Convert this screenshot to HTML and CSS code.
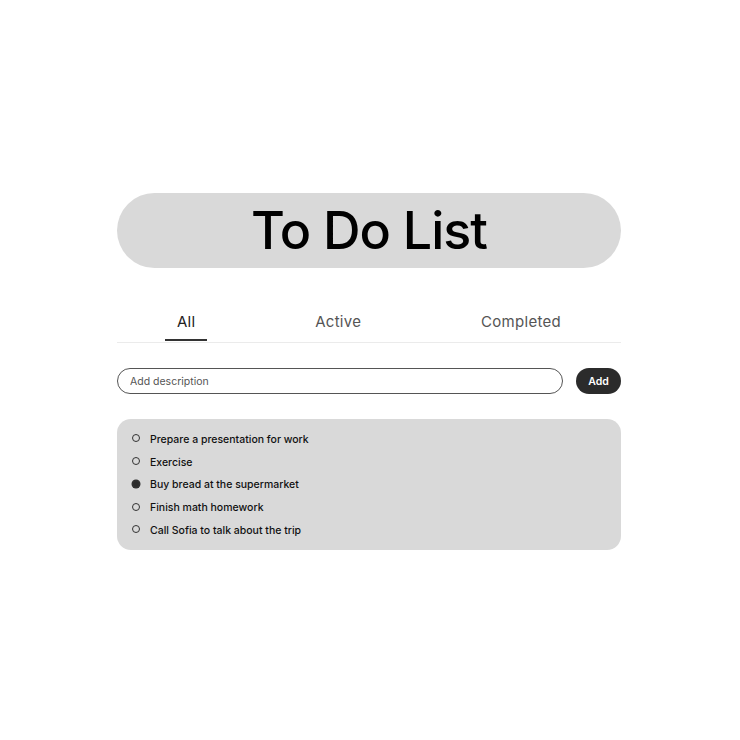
FILE: index.html
```html
<!DOCTYPE html>
<html lang="en">
<head>
<meta charset="utf-8">
<title>To Do List</title>
<link rel="stylesheet" href="styles.css">
</head>
<body>
<main class="app">
  <header class="title-bar">
    <h1 class="title">To Do List</h1>
  </header>
  <nav class="tabs">
    <button class="tab tab-active">All</button>
    <button class="tab">Active</button>
    <button class="tab">Completed</button>
  </nav>
  <form class="add-row">
    <input class="add-input" type="text" placeholder="Add description">
    <button class="add-btn" type="button">Add</button>
  </form>
  <ul class="task-list">
    <li class="task"><span class="radio"></span><span class="task-text">Prepare a presentation for work</span></li>
    <li class="task"><span class="radio"></span><span class="task-text">Exercise</span></li>
    <li class="task"><span class="radio radio-done"></span><span class="task-text">Buy bread at the supermarket</span></li>
    <li class="task"><span class="radio"></span><span class="task-text">Finish math homework</span></li>
    <li class="task"><span class="radio"></span><span class="task-text">Call Sofia to talk about the trip</span></li>
  </ul>
</main>
</body>
</html>
```
FILE: styles.css
```css
* { box-sizing: border-box; }
html, body { margin: 0; padding: 0; background: #ffffff; }
body { font-family: "Inter", "Noto Sans", sans-serif; color: #111; }

.app {
  width: 504px;
  margin: 193px 0 0 117px;
}

.title-bar {
  height: 75px;
  border-radius: 38px;
  background: #d9d9d9;
  display: flex;
  align-items: center;
  justify-content: center;
}
.title {
  margin: 0;
  font-size: 52px;
  font-weight: 500;
  letter-spacing: -1px;
  line-height: 1;
  color: #000;
}

.tabs {
  margin-top: 35px;
  display: flex;
  justify-content: space-around;
  border-bottom: 1px solid #ebebeb;
}
.tab {
  font-family: inherit;
  font-size: 15px;
  line-height: 20px;
  letter-spacing: 0.3px;
  color: #555;
  background: none;
  border: none;
  padding: 9px 12px 7px;
  border-bottom: 2px solid transparent;
  margin-bottom: 1px;
}
.tab-active {
  color: #222;
  border-bottom-color: #333;
}

.add-row {
  margin: 25px 0 0;
  display: flex;
  gap: 13px;
}
.add-input {
  flex: 1;
  height: 26px;
  border: 1px solid #555;
  border-radius: 13px;
  padding: 0 12px;
  font-family: inherit;
  font-size: 10.5px;
  color: #333;
  outline: none;
}
.add-input::placeholder { color: #555; }
.add-btn {
  width: 45px;
  height: 26px;
  border: none;
  border-radius: 13px;
  background: #2b2b2b;
  color: #fff;
  font-family: inherit;
  font-size: 10.5px;
  font-weight: 600;
  padding: 0;
}

.task-list {
  list-style: none;
  margin: 25px 0 0;
  padding: 9px 15px 8px;
  background: #d9d9d9;
  border-radius: 14px;
}
.task {
  height: 22.75px;
  display: flex;
  align-items: center;
  gap: 10px;
}
.radio {
  width: 8px;
  height: 8px;
  border: 1px solid #333;
  border-radius: 50%;
  flex: none;
  margin-top: -2px;
}
.radio-done {
  background: #2b2b2b;
  box-shadow: 0 0 0 0.5px #2b2b2b;
}
.task-text {
  font-size: 10.5px;
  font-weight: 500;
  color: #111;
}
```
